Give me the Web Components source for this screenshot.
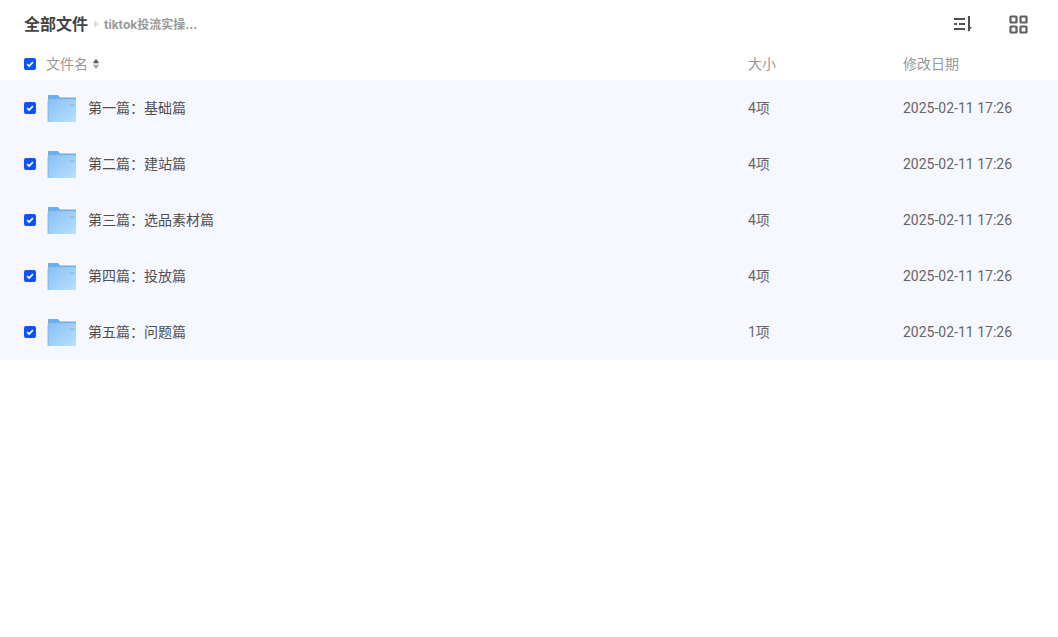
<!DOCTYPE html>
<html>
<head>
<meta charset="utf-8">
<style>
  html, body { margin: 0; background: #fff; }
  body { font-family: "Roboto", "Noto Sans CJK SC", sans-serif; }
</style>
</head>
<body>
<file-browser>
  <file-toolbar slot="top" current="tiktok投流实操..."></file-toolbar>
  <file-head></file-head>
  <file-row name="第一篇：基础篇" size="4项" date="2025-02-11 17:26"></file-row>
  <file-row name="第二篇：建站篇" size="4项" date="2025-02-11 17:26"></file-row>
  <file-row name="第三篇：选品素材篇" size="4项" date="2025-02-11 17:26"></file-row>
  <file-row name="第四篇：投放篇" size="4项" date="2025-02-11 17:26"></file-row>
  <file-row name="第五篇：问题篇" size="1项" date="2025-02-11 17:26"></file-row>
</file-browser>

<script>
// shared column layout, pushed down through custom properties
class FileBrowser extends HTMLElement {
  constructor() {
    super();
    this.attachShadow({ mode: 'open' }).innerHTML = `
      <style>
        :host {
          display: block;
          --col-name: 724px;
          --col-size: 155px;
          font-family: "Roboto", "Noto Sans CJK SC", sans-serif;
        }
      </style>
      <slot name="top"></slot>
      <slot></slot>`;
  }
}

class FileCheck extends HTMLElement {
  constructor() {
    super();
    this.attachShadow({ mode: 'open' }).innerHTML = `
      <style>
        :host { display: block; width: 12px; height: 12px; flex: none; }
        div { width: 12px; height: 12px; border-radius: 2px; background: #0d53ff; display: flex; }
        svg { width: 12px; height: 12px; }
      </style>
      <div>
        <svg viewBox="0 0 12 12"><path d="M3.2 6.1 5.2 8 8.8 4.1" fill="none" stroke="#fff" stroke-width="1.7"/></svg>
      </div>`;
  }
}

class FileToolbar extends HTMLElement {
  constructor() {
    super();
    const current = this.getAttribute('current');
    this.attachShadow({ mode: 'open' }).innerHTML = `
      <style>
        :host {
          display: flex;
          align-items: center;
          height: 48px;
          padding: 0 30px 0 24px;
        }
        .root { font-size: 16px; font-weight: 700; color: #444; padding-bottom: 2px; }
        .sep {
          width: 0; height: 0; margin: 0 5px 0 6px;
          border-left: 5px solid #dcdee3;
          border-top: 4px solid transparent;
          border-bottom: 4px solid transparent;
        }
        .current { font-family: "Inter", "Noto Sans CJK SC", sans-serif; font-size: 12px; font-weight: 700; color: #999; flex: 1; padding-bottom: 2px; }
        .tools { display: flex; gap: 35px; align-items: center; }
        svg { display: block; width: 20px; height: 20px; }
      </style>
      <span class="root">全部文件</span>
      <span class="sep"></span>
      <span class="current">${current}</span>
      <div class="tools">
        <svg viewBox="0 0 20 20" fill="none" stroke="#4f4f4f" stroke-width="2">
          <path d="M1 5h11M1 10h3M6 10h6M1 15h11"/>
          <path d="M16 2v15" />
          <path d="M15 18v-5h4z" fill="#4f4f4f" stroke="none"/>
        </svg>
        <svg viewBox="0 0 20 20" fill="none" stroke="#5f5f5f" stroke-width="2.2">
          <rect x="2.5" y="2.5" width="6" height="6" rx=".5"/>
          <rect x="12.5" y="2.5" width="6" height="6" rx=".5"/>
          <rect x="2.5" y="12.5" width="6" height="6" rx=".5"/>
          <rect x="12.5" y="12.5" width="6" height="6" rx=".5"/>
        </svg>
      </div>`;
  }
}

class FileHead extends HTMLElement {
  constructor() {
    super();
    this.attachShadow({ mode: 'open' }).innerHTML = `
      <style>
        :host {
          display: flex;
          align-items: center;
          height: 32px;
          padding-left: 24px;
          font-size: 14px;
          color: #999;
        }
        .name { width: var(--col-name); display: flex; align-items: center; gap: 4px; padding-left: 10px; box-sizing: border-box; margin-right: -12px; }
        .size { width: var(--col-size); }
        .up { padding-bottom: 2px; }
        svg { display: block; width: 8px; height: 12px; }
      </style>
      <file-check></file-check>
      <div class="name">
        <span class="up">文件名</span>
        <svg viewBox="0 0 8 12" stroke-linejoin="round" stroke-width="1">
          <path d="M4 1.5 6.5 4.8H1.5z" fill="#5c5c5c" stroke="#5c5c5c"/>
          <path d="M4 10.5 6.5 7.2H1.5z" fill="#aaa" stroke="#aaa"/>
        </svg>
      </div>
      <div class="size up">大小</div>
      <div class="up">修改日期</div>`;
  }
}

class FileRow extends HTMLElement {
  constructor() {
    super();
    const a = n => this.getAttribute(n);
    this.attachShadow({ mode: 'open' }).innerHTML = `
      <style>
        :host {
          display: flex;
          align-items: center;
          height: 56px;
          padding-left: 24px;
          background: #f7f8ff;
          font-size: 14px;
          color: #666;
        }
        .name { width: var(--col-name); display: flex; align-items: center; gap: 11px; padding-left: 10px; box-sizing: border-box; margin-right: -12px; color: #4f4f4f; }
        .size { width: var(--col-size); }
        .up { padding-bottom: 2px; }
        svg { display: block; width: 31px; height: 28px; flex: none; }
      </style>
      <file-check></file-check>
      <div class="name">
        <svg viewBox="0 0 31 28">
          <defs>
            <linearGradient id="g" x1="0" y1="0" x2="1" y2="1">
              <stop offset="0" stop-color="#85c0f3"/>
              <stop offset="1" stop-color="#bbdeff"/>
            </linearGradient>
          </defs>
          <path d="M2 2q0-1 1-1h9l2 2.5h15q1 0 1 1V9H2z" fill="#68afeb"/>
          <rect x="2" y="5" width="28" height="23" rx="1" fill="url(#g)"/>
          <path d="M2 6v21q0 1 1 1" fill="none" stroke="#6fb4ee" stroke-width=".8"/>
          <rect x="24" y="10" width="4" height="2" fill="#8cc3f3"/>
        </svg>
        <span class="up">${a('name')}</span>
      </div>
      <div class="size up">${a('size')}</div>
      <div>${a('date')}</div>`;
  }
}

customElements.define('file-browser', FileBrowser);
customElements.define('file-check', FileCheck);
customElements.define('file-toolbar', FileToolbar);
customElements.define('file-head', FileHead);
customElements.define('file-row', FileRow);
</script>
</body>
</html>
